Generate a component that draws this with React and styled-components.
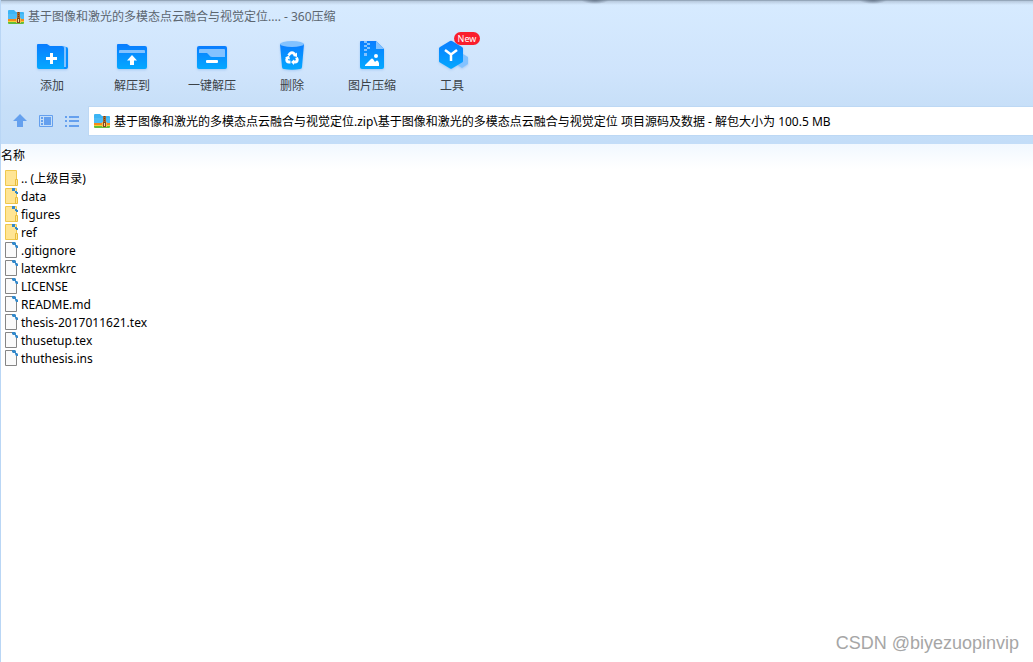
// --- IMPORTS

import * as React from 'react';
import styled, { createGlobalStyle } from 'styled-components';

// --- DATA

const archiveName = '基于图像和激光的多模态点云融合与视觉定位';

const files = [
	{ name: '.. (上级目录)', kind: 'parent' },
	{ name: 'data', kind: 'folder' },
	{ name: 'figures', kind: 'folder' },
	{ name: 'ref', kind: 'folder' },
	{ name: '.gitignore', kind: 'file' },
	{ name: 'latexmkrc', kind: 'file' },
	{ name: 'LICENSE', kind: 'file' },
	{ name: 'README.md', kind: 'file' },
	{ name: 'thesis-2017011621.tex', kind: 'file' },
	{ name: 'thusetup.tex', kind: 'file' },
	{ name: 'thuthesis.ins', kind: 'file' },
];

// --- STYLES

const GlobalStyle = createGlobalStyle`
	* {
		box-sizing: border-box;
	}

	body {
		margin: 0;
		background-color: #fff;
		color: #000;
		font: 12px/18px 'Noto Sans', 'Noto Sans CJK SC', sans-serif;
	}

	button,
	input {
		font: inherit;
	}
`;

const Window = styled.div`
	position: relative;
	display: flex;
	flex-direction: column;
	min-height: 100vh;
	border-left: 1px solid #b9d6f5;
	overflow: hidden;
`;

const Chrome = styled.header`
	position: relative;
	height: 144px;
	padding-top: 8px;
	background: linear-gradient(#d7ebff, #cfe4fc 50%, #c7dff8 74%, #c3ddf8);
`;

const TopShadow = styled.div`
	position: absolute;
	top: 0;
	left: 0;
	right: 0;
	height: 5px;
	background:
		radial-gradient(ellipse 14px 4px at 594px 0, #68788c, transparent),
		radial-gradient(ellipse 14px 4px at 872px 0, #68788c, transparent),
		linear-gradient(#95a7ba 1px, #b6c8dc 1px, transparent);
`;

const TitleBar = styled.div`
	display: flex;
	align-items: center;
	gap: 4px;
	height: 18px;
	padding-left: 7px;
`;

const Title = styled.h1`
	margin: 0;
	color: #5c6670;
	font-size: 12px;
	font-weight: 400;
	white-space: pre;
`;

const Toolbar = styled.nav`
	display: flex;
	padding: 10px 0 0 11px;
`;

const ToolButton = styled.button`
	position: relative;
	display: flex;
	flex-direction: column;
	align-items: center;
	gap: 1px;
	width: 80px;
	padding: 0;
	border: 0;
	background: none;
	color: #3c4248;
	white-space: nowrap;
`;

const ToolIcon = styled.svg`
	width: 40px;
	height: 40px;
	overflow: visible;
	filter: drop-shadow(0 1px 1px rgba(40, 120, 220, 0.25));
`;

const NewBadge = styled.span`
	position: absolute;
	top: -4px;
	left: 42px;
	width: 26px;
	height: 13px;
	border-radius: 7px;
	background-color: #fa1e2d;
	color: #fff;
	font-size: 9px;
	line-height: 13px;
	text-align: center;
`;

const AddressRow = styled.div`
	display: flex;
	align-items: center;
	margin-top: 12px;
	padding-left: 11px;
`;

const NavButtons = styled.div`
	display: flex;
	gap: 10px;
	width: 77px;
`;

const NavButton = styled.button`
	display: flex;
	width: 16px;
	height: 16px;
	padding: 0;
	border: 0;
	background: none;
`;

const AddressBox = styled.label`
	display: flex;
	flex: 1;
	align-items: center;
	gap: 4px;
	height: 28px;
	padding-left: 5px;
	background-color: #fff;
	box-shadow: 0 0 0 1px #bdd8f4;
`;

const AddressInput = styled.input`
	flex: 1;
	min-width: 0;
	padding: 2px 0 0;
	border: 0;
	outline: 0;
	background: none;
	color: #000;
`;

const FileTable = styled.table`
	width: 100%;
	border-spacing: 0;
`;

const HeadCell = styled.th`
	height: 25px;
	padding: 0 0 1px;
	background: linear-gradient(#f1f8ff, #fff);
	font-weight: 400;
	text-align: left;
`;

const FileCell = styled.td`
	height: 18px;
	padding: 0 0 0 4px;
`;

const FileEntry = styled.div`
	display: flex;
	align-items: center;
	gap: 2px;
	height: 18px;
	white-space: nowrap;
`;

const FileName = styled.span`
	padding-top: 2px;
`;

const Watermark = styled.div`
	position: absolute;
	right: 14px;
	bottom: 8px;
	color: #a6a6a6;
	font: 18px/22px 'Liberation Sans', sans-serif;
`;

// --- ICONS

const ArchiveIcon = () => (
	<svg width="16" height="16" viewBox="0 0 16 16" aria-hidden="true">
		<path d="M0 2q0-1 1-1h5l2 2h7q1 0 1 1v6H0z" fill="#3cb4f4" />
		<path d="M0 5h16v5H0z" fill="#4cbcf6" />
		<path d="M0 10h16v2H0z" fill="#f58a1c" />
		<path d="M0 12h16v1H0z" fill="#f8d030" />
		<path d="M0 13h16v1q0 1-1 1H1q-1 0-1-1z" fill="#62bd3c" />
		<path d="M9 3h3v6H9z" fill="#a5672c" />
		<path d="M10 3h1v1h-1zM10 5h1v1h-1zM10 7h1v1h-1z" fill="#6e3d18" />
		<path d="M8 9h5v5H8z" fill="#f3b856" />
		<path d="M9 9h3v5H9z" fill="#80451c" />
		<path d="M10 10h1v3h-1z" fill="#f6dc98" />
	</svg>
);

const BlueGradient = ({ id }) => (
	<linearGradient id={id} x1="0" y1="0" x2="0" y2="1">
		<stop offset="0" stopColor="#0a7dff" />
		<stop offset="1" stopColor="#04a8ff" />
	</linearGradient>
);

const AddIcon = () => (
	<ToolIcon viewBox="0 0 40 40" aria-hidden="true">
		<BlueGradient id="add" />
		<path d="M30 11h4q2 0 2 2v18q0 2-2 2h-4z" fill="#078eff" />
		<path d="M31 10h1q2 0 2 2v19h-2z" fill="#83c2ff" />
		<path d="M5 9q0-1 1-1h9l3 2h12q2 0 2 2v21H7q-2 0-2-2z" fill="url(#add)" />
		<path d="M19.500 17v11M14 22.500h11" stroke="#fff" strokeWidth="3" />
	</ToolIcon>
);

const ExtractIcon = () => (
	<ToolIcon viewBox="0 0 40 40" aria-hidden="true">
		<BlueGradient id="extract" />
		<path d="M5 9q0-1 1-1h9l3 2h15q2 0 2 2v19q0 2-2 2H7q-2 0-2-2z" fill="url(#extract)" />
		<path d="M7 17v-2q0-1 1-1h24q1 0 1 1v2z" fill="#83c2ff" />
		<path d="M20 19l5 5.500h-3v4.500h-4v-4.500h-3z" fill="#fff" />
	</ToolIcon>
);

const QuickExtractIcon = () => (
	<ToolIcon viewBox="0 0 40 40" aria-hidden="true">
		<BlueGradient id="quick" />
		<rect x="5" y="10" width="30" height="23" rx="2" fill="url(#quick)" />
		<path d="M7 14q0-1 1-1h24q1 0 1 1v7H20q-2 0-3-2l-2-2H7z" fill="#83c2ff" />
		<rect x="14" y="24" width="12" height="3" rx="1" fill="#fff" />
	</ToolIcon>
);

const DeleteIcon = () => (
	<ToolIcon viewBox="0 0 40 40" aria-hidden="true">
		<BlueGradient id="delete" />
		<path d="M8 8h24l-2 23q0 2-2 2-8 1.500-16 0-2 0-2-2z" fill="url(#delete)" />
		<ellipse cx="20" cy="8" rx="12" ry="3" fill="#83c2ff" />
		<g fill="none" stroke="#fff" strokeWidth="2.800">
			<path d="M16.500 19.500l1.500-2q2-1.500 4 0l1 1.500" />
			<path d="M24.500 21.500l.800 2q0 2.500-2.300 2.500h-2" />
			<path d="M18.500 26H17q-2.300 0-2.300-2.500l.8-2" />
		</g>
		<path d="M25 16.500v4.500l-4-1zM22 23.500v5.500l-3-3zM13 21.500l4-2 1 4z" fill="#fff" />
	</ToolIcon>
);

const ImageZipIcon = () => (
	<ToolIcon viewBox="0 0 40 40" aria-hidden="true">
		<BlueGradient id="image" />
		<path d="M8 6q0-1 1-1h15l8 8v18q0 2-2 2H10q-2 0-2-2z" fill="url(#image)" />
		<path d="M24 5l8 8h-8z" fill="#83c2ff" />
		<path d="M12 5h3v2h-3zM15 7h3v2h-3zM12 9h3v2h-3zM15 11h3v2h-3zM12 13h3v2h-3zM12 17h3v3h-3z" fill="#83c2ff" />
		<path d="M13 30v-1l6-6q1-1 2 0l2 3 1-1q1-1 2 0l1 2v3z" fill="#fff" />
		<circle cx="24" cy="20" r="2" fill="#fff" />
	</ToolIcon>
);

const ToolsIcon = () => (
	<ToolIcon viewBox="0 0 40 40" aria-hidden="true">
		<BlueGradient id="tools" />
		<path d="M31 18l5 3v7l-6 4-6-4z" fill="#83c2ff" />
		<path d="M18 5q1-.5 2 0l10 6q1 .500 1 1.500v12.500q0 1-1 1.500l-10 6q-1 .500-2 0l-10-6q-1-.5-1-1.500v-12.500q0-1 1-1.500z" fill="url(#tools)" />
		<path d="M13 14l6 4.500 6-4.500M19 18v7" fill="none" stroke="#fff" strokeWidth="2.500" />
	</ToolIcon>
);

const UpIcon = () => (
	<svg width="16" height="16" viewBox="0 0 16 16" aria-hidden="true">
		<path d="M8 1l7 7h-4v6H5V8H1z" fill="#65a0ee" />
	</svg>
);

const PanelIcon = () => (
	<svg width="16" height="16" viewBox="0 0 16 16" aria-hidden="true">
		<path d="M1.500 2.500h13v11h-13z" fill="none" stroke="#65a0ee" />
		<path d="M3 4h2v2H3zM3 7h2v2H3zM3 10h2v2H3zM6 4h7v8H6z" fill="#65a0ee" />
	</svg>
);

const ListIcon = () => (
	<svg width="16" height="16" viewBox="0 0 16 16" aria-hidden="true">
		<path d="M1 3h2v2H1zM1 7h2v2H1zM1 12h2v2H1zM5 3h10v2H5zM5 7h10v2H5zM5 12h10v2H5z" fill="#65a0ee" />
	</svg>
);

const FileIcon = ({ kind }) => (
	<svg width="14" height="16" viewBox="0 0 14 16" aria-hidden="true">
		{
			kind === 'file' ?
				<path d="M.5.5h8l3 3v12H.5z" fill="#fafafa" stroke="#858585" /> :
				<>
					<path d="M.5.5h11v15H.5z" fill="#ffe594" stroke="#efc84e" />
					<path d="M10.500 9.500h2v6h-2z" fill="#ffe594" stroke="#e8bd3c" />
				</>
		}
		{kind === 'file' && <path d="M7 0h3l1 1v2h1l1 1v2h-2l-1-2V3H8L7 2z" fill="#3489ca" />}
		{kind === 'folder' && <path d="M7 0h3v3H7zM10 3h2v1h1v2h-2V5h-1z" fill="#3489ca" />}
	</svg>
);

// --- COMPONENT

const tools = [
	{ label: '添加', Icon: AddIcon },
	{ label: '解压到', Icon: ExtractIcon },
	{ label: '一键解压', Icon: QuickExtractIcon },
	{ label: '删除', Icon: DeleteIcon },
	{ label: '图片压缩', Icon: ImageZipIcon },
	{ label: '工具', Icon: ToolsIcon, isNew: true },
];

export default class App extends React.Component {
	constructor(props) {
		super(props);
		this.state = {
			path: `${archiveName}.zip\\${archiveName} 项目源码及数据 - 解包大小为 100.5 MB`,
		};
		this.handlePathChange = this.handlePathChange.bind(this);
	}
	handlePathChange(e) {
		this.setState({ path: e.target.value });
	}

	render() {
		return (
			<Window>
				<GlobalStyle />
				<Chrome>
					<TopShadow />
					<TitleBar>
						<ArchiveIcon />
						<Title>{`${archiveName}.... - 360压缩`}</Title>
					</TitleBar>
					<Toolbar>
						{tools.map(({ label, Icon, isNew }) => (
							<ToolButton type="button" key={label}>
								<Icon />
								{label}
								{isNew && <NewBadge>New</NewBadge>}
							</ToolButton>
						))}
					</Toolbar>
					<AddressRow>
						<NavButtons>
							<NavButton type="button" aria-label="向上"><UpIcon /></NavButton>
							<NavButton type="button" aria-label="预览"><PanelIcon /></NavButton>
							<NavButton type="button" aria-label="列表"><ListIcon /></NavButton>
						</NavButtons>
						<AddressBox>
							<ArchiveIcon />
							<AddressInput
								aria-label="路径"
								value={this.state.path}
								onChange={this.handlePathChange}
							/>
						</AddressBox>
					</AddressRow>
				</Chrome>
				<FileTable>
					<thead>
						<tr>
							<HeadCell scope="col">名称</HeadCell>
						</tr>
					</thead>
					<tbody>
						{files.map(file => (
							<tr key={file.name}>
								<FileCell>
									<FileEntry>
										<FileIcon kind={file.kind} />
										<FileName>{file.name}</FileName>
									</FileEntry>
								</FileCell>
							</tr>
						))}
					</tbody>
				</FileTable>
				<Watermark>CSDN @biyezuopinvip</Watermark>
			</Window>
		);
	}
}
